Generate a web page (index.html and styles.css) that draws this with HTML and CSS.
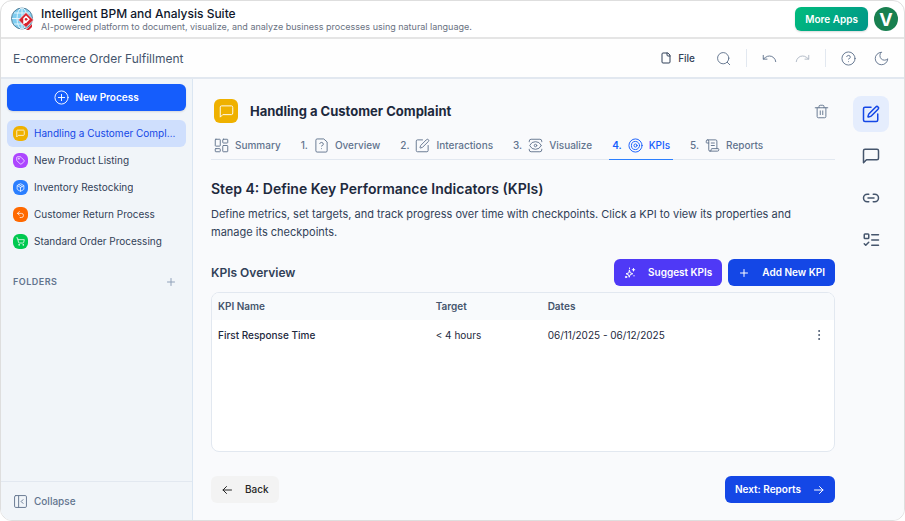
FILE: index.html
```html
<!DOCTYPE html>
<html lang="en">
<head>
    <meta charset="UTF-8">
    <meta name="viewport" content="width=device-width, initial-scale=1.0">
    <title>Intelligent BPM and Analysis Suite</title>
    <link rel="stylesheet" href="styles.css">
</head>
<body>
    <!-- Icon set, 24x24 grid -->
    <svg class="icon-set" aria-hidden="true">
        <symbol id="i-message" viewBox="0 0 24 24"><path d="M22 15a2 2 0 0 1-2 2H6l-4 4V5a2 2 0 0 1 2-2h16a2 2 0 0 1 2 2z"/></symbol>
        <symbol id="i-edit" viewBox="0 0 24 24"><path d="M12 3H4a2 2 0 0 0-2 2v15a2 2 0 0 0 2 2h15a2 2 0 0 0 2-2v-8"/><path d="M18.375 2.625a1 1 0 0 1 3 3l-9.013 9.014a2 2 0 0 1-.853.505l-2.873.84a.5.5 0 0 1-.62-.62l.84-2.873a2 2 0 0 1 .506-.852z"/></symbol>
        <symbol id="i-plus" viewBox="0 0 24 24"><path d="M5 12h14M12 5v14"/></symbol>
        <symbol id="i-circle-plus" viewBox="0 0 24 24"><circle cx="12" cy="12" r="10.500"/><path d="M7 12h10M12 7v10"/></symbol>
        <symbol id="i-file" viewBox="0 0 24 24"><path d="M15 2H6a2 2 0 0 0-2 2v16a2 2 0 0 0 2 2h12a2 2 0 0 0 2-2V7z"/><path d="M14 2v4a2 2 0 0 0 2 2h4"/></symbol>
        <symbol id="i-search" viewBox="0 0 24 24"><circle cx="11.500" cy="11.500" r="9"/><path d="m22 22-4-4"/></symbol>
        <symbol id="i-undo" viewBox="0 0 24 24"><path d="M2 7v6h6"/><path d="M22 17a10 10 0 0 0-10-9 10 10 0 0 0-6.500 2.300L2 13"/></symbol>
        <symbol id="i-redo" viewBox="0 0 24 24"><path d="M22 7v6h-6"/><path d="M2 17a10 10 0 0 1 10-9 10 10 0 0 1 6.500 2.300L22 13"/></symbol>
        <symbol id="i-help" viewBox="0 0 24 24"><circle cx="12" cy="12" r="10.500"/><path d="M9.090 9a3 3 0 0 1 5.830 1c0 2-3 3-3 3M12 17h.01"/></symbol>
        <symbol id="i-moon" viewBox="0 0 24 24"><path d="M11.500 2a7 7 0 0 0 10.500 10.500 10 10 0 1 1-10.500-10.500z"/></symbol>
        <symbol id="i-tag" viewBox="0 0 24 24"><path d="M12.586 2.586A2 2 0 0 0 11.172 2H4a2 2 0 0 0-2 2v7.172a2 2 0 0 0 .586 1.414l8.704 8.704a2.426 2.426 0 0 0 3.42 0l6.58-6.58a2.426 2.426 0 0 0 0-3.42z"/><circle cx="7.5" cy="7.5" r=".8"/></symbol>
        <symbol id="i-package" viewBox="0 0 24 24"><path d="M11 21.73a2 2 0 0 0 2 0l7-4A2 2 0 0 0 21 16V8a2 2 0 0 0-1-1.73l-7-4a2 2 0 0 0-2 0l-7 4A2 2 0 0 0 3 8v8a2 2 0 0 0 1 1.73z"/><path d="M12 22V12M3.3 7 12 12l8.7-5M7.5 4.27l9 5.15"/></symbol>
        <symbol id="i-return" viewBox="0 0 24 24"><path d="M9 14 4 9l5-5"/><path d="M4 9h10.5a5.5 5.5 0 0 1 0 11H11"/></symbol>
        <symbol id="i-cart" viewBox="0 0 24 24"><circle cx="8" cy="21" r="1"/><circle cx="19" cy="21" r="1"/><path d="M2.05 2.05h2l2.66 12.42a2 2 0 0 0 2 1.58h9.78a2 2 0 0 0 1.95-1.57l1.65-7.43H5.12"/></symbol>
        <symbol id="i-panel" viewBox="0 0 24 24"><rect x="2.500" y="2.500" width="19" height="19" rx="2"/><path d="M9 3v18M16 15l-3-3 3-3"/></symbol>
        <symbol id="i-dashboard" viewBox="0 0 24 24"><rect x="2" y="2" width="8" height="11" rx="1"/><rect x="14" y="2" width="8" height="6" rx="1"/><rect x="14" y="12" width="8" height="10" rx="1"/><rect x="2" y="17" width="8" height="5" rx="1"/></symbol>
        <symbol id="i-file-question" viewBox="0 0 24 24"><path d="M15 1.500H5a2 2 0 0 0-2 2v17a2 2 0 0 0 2 2h14a2 2 0 0 0 2-2V7z"/><path d="M9.1 9a3 3 0 0 1 5.82 1c0 2-3 3-3 3M12 17h.01"/></symbol>
        <symbol id="i-view" viewBox="0 0 24 24"><path d="M22 18v1a3 3 0 0 1-3 3H5a3 3 0 0 1-3-3v-1M22 6V5a3 3 0 0 0-3-3H5a3 3 0 0 0-3 3v1"/><circle cx="12" cy="12" r="2"/><path d="M21 12.500a1 1 0 0 0 0-1 10 10 0 0 0-18 0 1 1 0 0 0 0 1 10 10 0 0 0 18 0"/></symbol>
        <symbol id="i-target" viewBox="0 0 24 24"><circle cx="12" cy="12" r="10.500"/><circle cx="12" cy="12" r="6.500"/><circle cx="12" cy="12" r="2.500"/></symbol>
        <symbol id="i-scroll" viewBox="0 0 24 24"><path d="M15 12h-5M15 8h-5M19 17V5a2 2 0 0 0-2-2H4"/><path d="M8 21h12a2 2 0 0 0 2-2v-1a1 1 0 0 0-1-1H11a1 1 0 0 0-1 1v1a2 2 0 1 1-4 0V5a2 2 0 1 0-4 0v2a1 1 0 0 0 1 1h3"/></symbol>
        <symbol id="i-trash" viewBox="0 0 24 24"><path d="M2 6h20M19 6v14a2 2 0 0 1-2 2H7a2 2 0 0 1-2-2V6M8 6V4a2 2 0 0 1 2-2h4a2 2 0 0 1 2 2v2M10 11v6M14 11v6"/></symbol>
        <symbol id="i-link" viewBox="0 0 24 24"><path d="M9 17H7A5 5 0 0 1 7 7h2M15 7h2a5 5 0 1 1 0 10h-2M8 12h8"/></symbol>
        <symbol id="i-todo" viewBox="0 0 24 24"><rect x="3" y="4" width="6" height="6" rx="1"/><path d="m3 17 2 2 4-4M13 5h9M13 12h9M13 19h9"/></symbol>
        <symbol id="i-sparkles" viewBox="0 0 24 24"><path d="M11 6.500 12.500 11.500 17.500 13.500 12.500 15 10.500 20.500 9 15.500 4 13.500 9 12z"/><path d="M19 3v5M16.500 5.500h5M11 2v1M20 17v1"/><circle cx="4" cy="20" r="1.500"/></symbol>
        <symbol id="i-dots" viewBox="0 0 24 24"><circle cx="12" cy="12" r="1"/><circle cx="12" cy="4" r="1"/><circle cx="12" cy="20" r="1"/></symbol>
        <symbol id="i-left" viewBox="0 0 24 24"><path d="m11 19-7-7 7-7M21 12H4"/></symbol>
        <symbol id="i-right" viewBox="0 0 24 24"><path d="M3 12h17M13 5l7 7-7 7"/></symbol>
    </svg>

    <div class="window">
        <header class="app-header">
            <svg class="logo" viewBox="0 0 24 24" aria-hidden="true">
                <circle cx="12" cy="11.500" r="10.500" fill="#7fcdf0" stroke="#54809a"/>
                <path d="M12 1v21M2 11.500h20M4 6h16M4 17h16" fill="none" stroke="#e2f5fd"/>
                <ellipse cx="12" cy="11.500" rx="5" ry="10.500" fill="none" stroke="#e2f5fd"/>
                <path d="M16 5.500 23.500 13 16 20.500 8.500 13z" fill="#d8232f" stroke="#fff" stroke-width=".6"/>
                <path d="M14 17v-5.500l2-2 2.800 2.800-2.800 2.800-1.500-1.500" fill="none" stroke="#fff" stroke-width="1.500"/>
                <path d="m16 23 6-6v3l-3 3z" fill="#d8232f"/>
            </svg>
            <div class="app-name">
                <strong>Intelligent BPM and Analysis Suite</strong>
                <span>AI-powered platform to document, visualize, and analyze business processes using natural language.</span>
            </div>
            <button class="more-apps">More Apps</button>
            <button class="avatar" aria-label="Account">V</button>
        </header>

        <div class="toolbar">
            <span class="workspace">E-commerce Order Fulfillment</span>
            <button class="file-btn"><svg class="icon small"><use href="#i-file"/></svg>File</button>
            <button class="tool" aria-label="Search"><svg class="icon"><use href="#i-search"/></svg></button>
            <span class="divider"></span>
            <button class="tool" aria-label="Undo"><svg class="icon"><use href="#i-undo"/></svg></button>
            <button class="tool" aria-label="Redo" disabled><svg class="icon"><use href="#i-redo"/></svg></button>
            <span class="divider"></span>
            <button class="tool" aria-label="Help"><svg class="icon"><use href="#i-help"/></svg></button>
            <button class="tool" aria-label="Dark mode"><svg class="icon"><use href="#i-moon"/></svg></button>
        </div>

        <div class="body">
            <aside class="sidebar">
                <button class="new-process"><svg class="icon"><use href="#i-circle-plus"/></svg>New Process</button>
                <nav class="processes">
                    <a href="#" class="process active"><span class="badge yellow"><svg class="icon"><use href="#i-message"/></svg></span><span class="label">Handling a Customer Complaint</span></a>
                    <a href="#" class="process"><span class="badge purple"><svg class="icon"><use href="#i-tag"/></svg></span><span class="label">New Product Listing</span></a>
                    <a href="#" class="process"><span class="badge blue"><svg class="icon"><use href="#i-package"/></svg></span><span class="label">Inventory Restocking</span></a>
                    <a href="#" class="process"><span class="badge orange"><svg class="icon"><use href="#i-return"/></svg></span><span class="label">Customer Return Process</span></a>
                    <a href="#" class="process"><span class="badge green"><svg class="icon"><use href="#i-cart"/></svg></span><span class="label">Standard Order Processing</span></a>
                </nav>
                <div class="folders">
                    <span>FOLDERS</span>
                    <button aria-label="Add folder"><svg class="icon small"><use href="#i-plus"/></svg></button>
                </div>
                <button class="collapse"><svg class="icon"><use href="#i-panel"/></svg>Collapse</button>
            </aside>

            <main class="content">
                <div class="title-row">
                    <span class="title-icon"><svg class="icon"><use href="#i-message"/></svg></span>
                    <h1>Handling a Customer Complaint</h1>
                    <button class="delete" aria-label="Delete process"><svg class="icon"><use href="#i-trash"/></svg></button>
                </div>

                <nav class="tabs">
                    <a href="#" class="tab"><svg class="icon"><use href="#i-dashboard"/></svg>Summary</a>
                    <a href="#" class="tab"><span>1.</span><svg class="icon"><use href="#i-file-question"/></svg>Overview</a>
                    <a href="#" class="tab"><span>2.</span><svg class="icon"><use href="#i-edit"/></svg>Interactions</a>
                    <a href="#" class="tab"><span>3.</span><svg class="icon"><use href="#i-view"/></svg>Visualize</a>
                    <a href="#" class="tab active"><span>4.</span><svg class="icon"><use href="#i-target"/></svg>KPIs</a>
                    <a href="#" class="tab"><span>5.</span><svg class="icon"><use href="#i-scroll"/></svg>Reports</a>
                </nav>

                <h2>Step 4: Define Key Performance Indicators (KPIs)</h2>
                <p class="intro">Define metrics, set targets, and track progress over time with checkpoints. Click a KPI to view its properties and manage its checkpoints.</p>

                <div class="section-head">
                    <h3>KPIs Overview</h3>
                    <button class="btn indigo"><svg class="icon small"><use href="#i-sparkles"/></svg>Suggest KPIs</button>
                    <button class="btn primary"><svg class="icon small"><use href="#i-plus"/></svg>Add New KPI</button>
                </div>

                <div class="table-box">
                    <table>
                        <thead>
                            <tr><th class="col-name">KPI Name</th><th class="col-target">Target</th><th>Dates</th><th class="col-menu"></th></tr>
                        </thead>
                        <tbody>
                            <tr>
                                <td class="kpi-name">First Response Time</td>
                                <td>&lt; 4 hours</td>
                                <td>06/11/2025 - 06/12/2025</td>
                                <td class="col-menu"><button aria-label="KPI actions"><svg class="icon small"><use href="#i-dots"/></svg></button></td>
                            </tr>
                        </tbody>
                    </table>
                </div>

                <div class="pager">
                    <button class="btn plain"><svg class="icon small"><use href="#i-left"/></svg>Back</button>
                    <button class="btn primary">Next: Reports<svg class="icon small"><use href="#i-right"/></svg></button>
                </div>
            </main>

            <aside class="rail">
                <button class="active" aria-label="Properties"><svg class="icon large"><use href="#i-edit"/></svg></button>
                <button aria-label="Comments"><svg class="icon large"><use href="#i-message"/></svg></button>
                <button aria-label="Links"><svg class="icon large"><use href="#i-link"/></svg></button>
                <button aria-label="Tasks"><svg class="icon large"><use href="#i-todo"/></svg></button>
            </aside>
        </div>
    </div>
</body>
</html>
```

FILE: styles.css
```css
* {
    margin: 0;
    padding: 0;
    box-sizing: border-box;
}

body {
    height: 100vh;
    background: #fff;
    color: #1d293d;
    font-family: Inter, "Liberation Sans", sans-serif;
    font-size: 10px;
    line-height: 15px;
}

button {
    border: none;
    background: none;
    color: inherit;
    font: inherit;
    cursor: pointer;
}

a {
    color: inherit;
    text-decoration: none;
}

.icon-set {
    display: none;
}

.icon {
    width: 15px;
    height: 15px;
    flex-shrink: 0;
    fill: none;
    stroke: currentColor;
    stroke-width: 2;
    stroke-linecap: round;
    stroke-linejoin: round;
}

.icon.small {
    width: 12px;
    height: 12px;
}

.icon.large {
    width: 18px;
    height: 18px;
}

.window {
    display: flex;
    flex-direction: column;
    height: 100%;
    border: 1px solid #dedede;
    border-radius: 12px;
    overflow: hidden;
}

/* Header */
.app-header {
    display: flex;
    align-items: center;
    height: 38px;
    padding: 0 6px 0 9px;
    border-bottom: 2px solid #e5e5e5;
}

.logo {
    width: 24px;
    height: 24px;
    margin-right: 7px;
}

.app-name {
    display: flex;
    flex-direction: column;
    flex: 1;
}

.app-name strong {
    color: #0f172b;
    font-size: 12px;
    font-weight: 500;
    line-height: 15px;
}

.app-name span {
    color: #6a7282;
    font-size: 9px;
    line-height: 12px;
}

.more-apps {
    height: 24px;
    padding: 0 10px;
    margin-right: 6px;
    border-radius: 6px;
    background: linear-gradient(135deg, #00bc7d, #009689);
    box-shadow: 0 1px 2px rgba(0, 0, 0, 0.15);
    color: #fff;
    font-weight: 600;
}

.avatar {
    width: 24px;
    height: 24px;
    border-radius: 50%;
    background: #188050;
    color: #fff;
    font-size: 18px;
    font-weight: 700;
}

/* Toolbar */
.toolbar {
    display: flex;
    align-items: center;
    height: 40px;
    padding: 0 6px 0 12px;
    border-bottom: 2px solid #e2e8f0;
    background: #fefefe;
    color: #62748e;
}

.workspace {
    flex: 1;
    color: #45556c;
    font-size: 12px;
}

.file-btn {
    display: flex;
    align-items: center;
    gap: 6px;
    padding: 6px 12px;
    color: #314158;
    font-weight: 500;
}

.tool {
    display: flex;
    padding: 6px;
    margin: 0 3px;
}

.tool:disabled {
    opacity: 0.5;
}

.tool .icon,
.tab .icon,
.new-process .icon,
.delete .icon,
.collapse .icon {
    stroke-width: 1.5;
}

.divider {
    width: 1px;
    height: 18px;
    margin: 0 6px;
    background: #e2e8f0;
}

.body {
    display: flex;
    flex: 1;
    min-height: 0;
    background: #f9fafc;
}

/* Sidebar */
.sidebar {
    display: flex;
    flex-direction: column;
    width: 192px;
    padding-top: 5px;
    border-right: 1px solid #dbe6f2;
    background: #f1f5f9;
}

.new-process {
    display: flex;
    align-items: center;
    justify-content: center;
    gap: 6px;
    height: 27px;
    margin: 0 6px 9px;
    border-radius: 6px;
    background: #155dfc;
    box-shadow: 0 1px 2px rgba(0, 0, 0, 0.12);
    color: #fff;
    font-weight: 600;
}

.processes {
    padding: 0 6px;
}

.process {
    display: flex;
    align-items: center;
    gap: 6px;
    height: 27px;
    padding: 0 6px;
    border-radius: 6px;
    color: #314158;
}

.process.active {
    background: #cfdffd;
    color: #1447e6;
}

.label {
    overflow: hidden;
    text-overflow: ellipsis;
    white-space: nowrap;
}

.badge {
    display: flex;
    align-items: center;
    justify-content: center;
    flex-shrink: 0;
    width: 15px;
    height: 15px;
    border-radius: 6px;
    color: #fff;
}

.badge .icon {
    width: 9px;
    height: 9px;
}

.yellow { background: #efb100; }
.purple { background: #ad46ff; }
.blue { background: #2b7fff; }
.orange { background: #ff6900; }
.green { background: #00c950; }

.folders {
    display: flex;
    align-items: center;
    justify-content: space-between;
    margin-top: 19px;
    padding: 0 15px 0 12px;
    color: #62748e;
    font-size: 9px;
    font-weight: 600;
    letter-spacing: 0.5px;
}

.folders button {
    display: flex;
    color: #90a1b9;
}

.collapse {
    display: flex;
    align-items: center;
    gap: 6px;
    height: 39px;
    margin-top: auto;
    padding: 0 12px;
    border-top: 1px solid #e2e8f0;
    color: #62748e;
    font-weight: 500;
}

/* Content */
.content {
    display: flex;
    flex-direction: column;
    flex: 1;
    min-width: 0;
    padding: 20px 18px 17px;
}

.title-row {
    display: flex;
    align-items: center;
    gap: 12px;
    padding: 0 6px 0 3px;
}

.title-icon {
    display: flex;
    align-items: center;
    justify-content: center;
    width: 24px;
    height: 24px;
    border-radius: 6px;
    background: #efb100;
    color: #fff;
}

.title-icon .icon {
    stroke-width: 1.5;
}

h1 {
    flex: 1;
    font-size: 13px;
    font-weight: 700;
    line-height: 18px;
}

.delete {
    display: flex;
    color: #62748e;
}

.tabs {
    display: flex;
    gap: 14px;
    margin-top: 9px;
    border-bottom: 1px solid #e2e8f0;
}

.tab {
    display: flex;
    align-items: center;
    gap: 6px;
    height: 28px;
    padding: 0 3px;
    margin-bottom: -1px;
    border-bottom: 1px solid transparent;
    color: #62748e;
    font-weight: 500;
    white-space: nowrap;
}

.tab.active {
    border-bottom-color: #2b7fff;
    color: #155dfc;
}

.tab.active span {
    font-weight: 600;
}

h2 {
    margin-top: 18px;
    font-size: 14px;
    font-weight: 600;
    line-height: 22px;
}

.intro {
    margin-top: 5px;
    color: #314158;
    font-size: 11px;
    line-height: 18px;
}

.section-head {
    display: flex;
    align-items: center;
    gap: 6px;
    margin-top: 18px;
}

h3 {
    flex: 1;
    color: #314158;
    font-size: 12px;
    font-weight: 600;
}

.btn {
    display: flex;
    align-items: center;
    gap: 12px;
    height: 27px;
    padding: 0 10px;
    border-radius: 6px;
    color: #fff;
    font-weight: 600;
}

.primary { background: #1447e6; }
.indigo { background: #4f39f6; }

.plain {
    background: #f3f3f3;
    color: #262626;
    font-weight: 500;
}

.table-box {
    flex: 1;
    margin-top: 6px;
    border: 1px solid #e2e8f0;
    border-radius: 8px;
    background: #fff;
    overflow: hidden;
}

table {
    width: 100%;
    border-collapse: collapse;
}

th,
td {
    padding: 6px;
    text-align: left;
}

th {
    background: #f8fafc;
    color: #45556c;
    font-weight: 600;
}

td {
    height: 30px;
}

.col-name { width: 35%; }
.col-target { width: 18%; }

.col-menu {
    width: 30px;
}

.col-menu button {
    display: flex;
    margin: 0 3px;
    color: #45556c;
}

.kpi-name {
    font-weight: 500;
}

.pager {
    display: flex;
    justify-content: space-between;
    margin-top: 24px;
}

/* Right rail */
.rail {
    display: flex;
    flex-direction: column;
    gap: 6px;
    padding: 17px 15px 0 0;
}

.rail button {
    display: flex;
    align-items: center;
    justify-content: center;
    width: 36px;
    height: 36px;
    border-radius: 8px;
    color: #45556c;
}

.rail .active {
    background: #e5edfd;
    color: #1447e6;
}
```
